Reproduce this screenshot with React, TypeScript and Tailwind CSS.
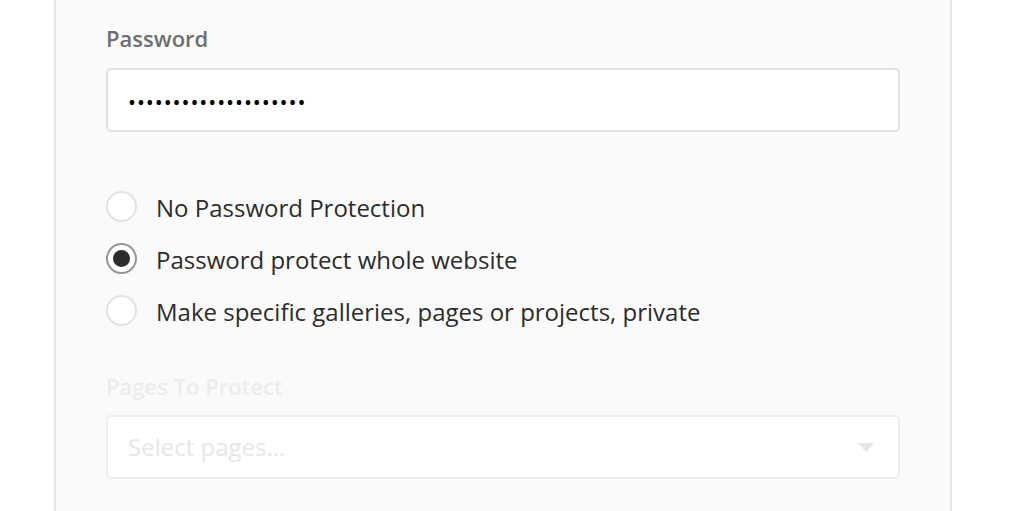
import React, { useState } from 'react';

const options = [
  'No Password Protection',
  'Password protect whole website',
  'Make specific galleries, pages or projects, private',
];

const App: React.FC = () => {
  const [selected, setSelected] = useState(1);

  return (
    <div className="w-[1024px] h-[511px] bg-white overflow-hidden font-['Open_Sans',sans-serif]">
      <div className="ml-[54px] w-[898px] h-full bg-[#fafafa] border-x-2 border-[#e6e6e6] px-[50px] pt-[23px]">
        <label className="block text-[22px] leading-[30px] font-semibold text-[#6e6e6e]">Password</label>
        <div className="mt-[15px] h-[64px] bg-white border-2 border-[#e1e1e1] rounded-[5px] flex items-center pl-[21px] pt-[4px]">
          <span className="text-[16px] tracking-[2.9px] text-black font-bold">••••••••••••••••••••</span>
        </div>

        <div className="mt-[59px] flex flex-col gap-[21px]">
          {options.map((opt, i) => (
            <button key={opt} type="button" onClick={() => setSelected(i)} className="flex items-center h-[31px] text-left">
              <span
                className={
                  i === selected
                    ? 'w-[31px] h-[31px] rounded-full border-2 border-[#959595] bg-white flex items-center justify-center'
                    : 'w-[31px] h-[31px] rounded-full border-2 border-[#e3e3e3] bg-white flex items-center justify-center'
                }
              >
                {i === selected && <span className="w-[17px] h-[17px] rounded-full bg-[#2c2c2c]" />}
              </span>
              <span className="ml-[19px] text-[24px] text-[#2c2c2c] pt-[2px]">{opt}</span>
            </button>
          ))}
        </div>

        <label className="block mt-[45px] text-[22px] leading-[30px] font-semibold text-[#ececec]">Pages To Protect</label>
        <div className="mt-[14px] h-[64px] bg-white border-2 border-[#eeeeee] rounded-[5px] flex items-center justify-between pl-[20px] pr-[24px]">
          <span className="text-[24px] text-[#e6e6e6]">Select pages...</span>
          <svg width="16" height="9" viewBox="0 0 16 9">
            <path d="M0 0 L16 0 L8 9 Z" fill="#e6e6e6" />
          </svg>
        </div>
      </div>
    </div>
  );
};

export default App;
